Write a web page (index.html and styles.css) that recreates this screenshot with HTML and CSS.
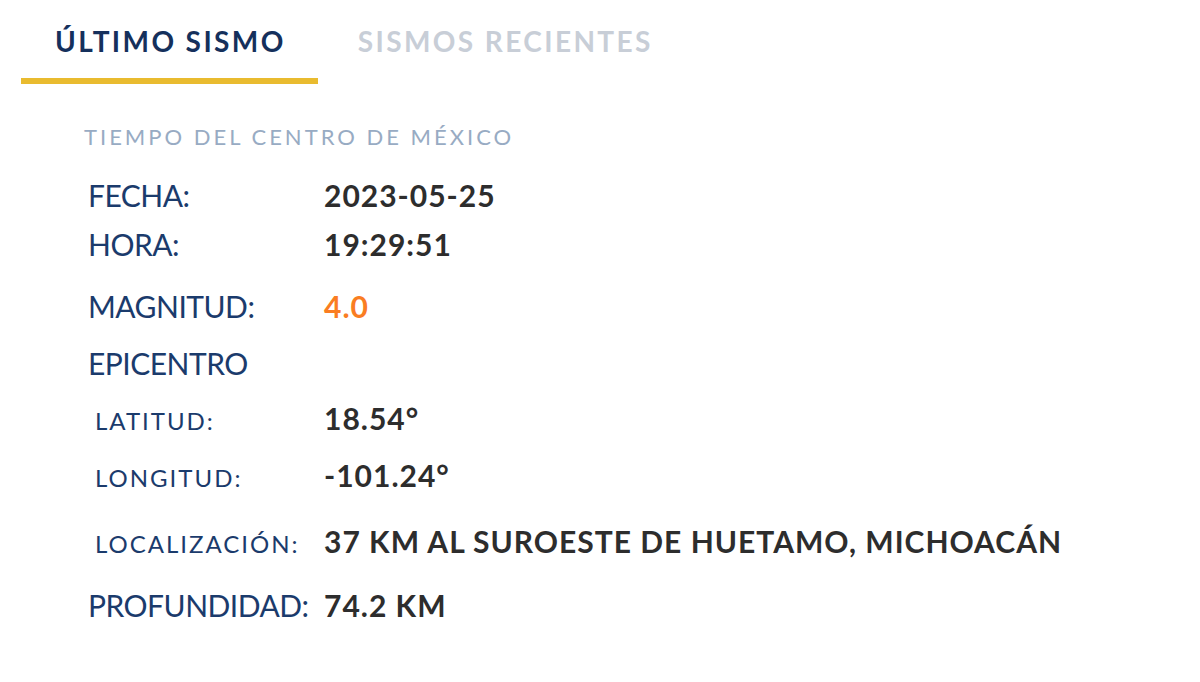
FILE: index.html
```html
<!DOCTYPE html>
<html lang="es">
<head>
    <meta charset="UTF-8">
    <meta name="viewport" content="width=device-width, initial-scale=1.0">
    <title>Último sismo</title>
    <link rel="stylesheet" href="styles.css">
</head>
<body>

    <!-- Tabs -->
    <nav class="tabs">
        <a class="tab active" href="#">ÚLTIMO SISMO</a>
        <a class="tab" href="#">SISMOS RECIENTES</a>
    </nav>

    <!-- Ultimo sismo -->
    <section class="quake">
        <p class="quake-note">TIEMPO DEL CENTRO DE MÉXICO</p>

        <div class="quake-data">
            <span class="label">FECHA:</span>
            <span class="value">2023-05-25</span>

            <span class="label">HORA:</span>
            <span class="value">19:29:51</span>

            <span class="label">MAGNITUD:</span>
            <span class="value magnitude">4.0</span>

            <span class="label full">EPICENTRO</span>

            <span class="label sub">LATITUD:</span>
            <span class="value">18.54°</span>

            <span class="label sub">LONGITUD:</span>
            <span class="value">-101.24°</span>

            <span class="label sub">LOCALIZACIÓN:</span>
            <span class="value">37 KM AL SUROESTE DE HUETAMO, MICHOACÁN</span>

            <span class="label">PROFUNDIDAD:</span>
            <span class="value">74.2 KM</span>
        </div>
    </section>

</body>
</html>
```

FILE: styles.css
```css
/* General page styles */
body {
    font-family: 'Lato', 'Liberation Sans', sans-serif;
    margin: 0;
    padding: 0;
    background-color: #ffffff;
    color: #333;
}

/* Tabs */
.tabs {
    display: flex;
    gap: 6px;
    padding-left: 21px;
}

.tab {
    display: block;
    padding: 24px 32px 20px 34px;
    font-size: 28px;
    line-height: 34px;
    font-weight: bold;
    letter-spacing: 2.4px;
    color: #c8ced7;
    text-decoration: none;
    border-bottom: 6px solid transparent;
}

.tab.active {
    color: #15305c;
    border-bottom-color: #e9bb2f;
}

/* Earthquake info */
.quake {
    padding-left: 84px;
}

.quake-note {
    margin: 40px 0 0;
    font-size: 22px;
    line-height: 26px;
    letter-spacing: 3px;
    color: #98abc3;
}

.quake-data {
    display: grid;
    grid-template-columns: 236px auto;
    grid-template-rows: 49px 62px 57px 55px 57px 66px 64px auto;
    align-items: baseline;
    margin-top: 27px;
    padding-left: 4px;
}

.label {
    font-size: 30px;
    line-height: 36px;
    letter-spacing: -0.5px;
    color: #1b3b6c;
}

.label.full {
    grid-column: 1 / 3;
}

.label.sub {
    padding-left: 7px;
    font-size: 24px;
    letter-spacing: 2px;
}

.value {
    font-size: 30px;
    line-height: 36px;
    font-weight: bold;
    letter-spacing: 1px;
    color: #2d2d2d;
}

.value.magnitude {
    color: #fa7d22;
}
```
